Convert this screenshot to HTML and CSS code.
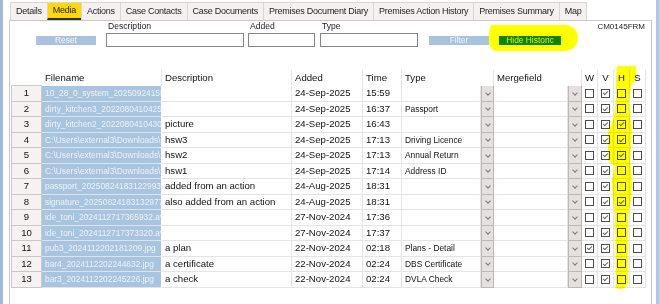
FILE: index.html
```html
<!DOCTYPE html>
<html lang="en">
<head>
  <meta charset="UTF-8">
  <meta name="viewport" content="width=device-width, initial-scale=1.0">
  <title>Media</title>
  <link rel="stylesheet" href="styles.css">
</head>
<body>

<div class="screen">
  <nav class="tabs">
    <a class="tab">Details</a>
    <a class="tab active">Media</a>
    <a class="tab">Actions</a>
    <a class="tab">Case Contacts</a>
    <a class="tab">Case Documents</a>
    <a class="tab">Premises Document Diary</a>
    <a class="tab">Premises Action History</a>
    <a class="tab">Premises Summary</a>
    <a class="tab">Map</a>
  </nav>

  <section class="panel">
    <div class="filters">
      <div class="field gap-reset"><button class="btn">Reset</button></div>
      <div class="field gap-desc"><label>Description</label><input class="in-desc"></div>
      <div class="field gap-added"><label>Added</label><input class="in-added"></div>
      <div class="field gap-type"><label>Type</label><input class="in-type"></div>
      <div class="field gap-filter"><button class="btn">Filter</button></div>
      <div class="field"><button class="btn hide">Hide Historic</button></div>
      <span class="form-code">CM0145FRM</span>
    </div>

    <div class="media-table">
      <div class="row head">
        <div class="cell num"></div>
        <div class="cell">Filename</div>
        <div class="cell">Description</div>
        <div class="cell">Added</div>
        <div class="cell">Time</div>
        <div class="cell span2">Type</div>
        <div class="cell span2">Mergefield</div>
        <div class="cell check">W</div>
        <div class="cell check">V</div>
        <div class="cell check">H</div>
        <div class="cell check">S</div>
      </div>
      <div id="mediaRows"></div>
    </div>
  </section>
</div>

<svg class="marker" width="659" height="304" viewBox="0 0 659 304">
  <path d="M492,25 L566,25 Q578,27 578,38 Q577,50 565,51 L496,51 Q489,50 489,39 Q489,26 492,25 Z"/>
  <path d="M617,66 L636,66 L636,78 L631,86 L629,100 L630,116 L632,130 L630,160 L632,180 L631,200 L628,215 L628,284 Q623,292 616,288 L615,215 L613,200 L612,181 L615,166 L608,160 L608,132 L614,118 L616,100 L616,80 Z"/>
</svg>

<script>
  // Media rows: filename, description, added, time, type, [W, V, H, S]
  const media = [
    ["10_28_0_system_20250924155912.jpg", "", "24-Sep-2025", "15:59", "", [0, 1, 0, 0]],
    ["dirty_kitchen3_20220804104251.jpg", "", "24-Sep-2025", "16:37", "Passport", [0, 1, 0, 0]],
    ["dirty_kitchen2_20220804104301.jpg", "picture", "24-Sep-2025", "16:43", "", [0, 1, 1, 0]],
    ["C:\\Users\\external3\\Downloads\\hsw3.pdf", "hsw3", "24-Sep-2025", "17:13", "Driving Licence", [0, 1, 1, 0]],
    ["C:\\Users\\external3\\Downloads\\hsw2.pdf", "hsw2", "24-Sep-2025", "17:13", "Annual Return", [0, 1, 1, 0]],
    ["C:\\Users\\external3\\Downloads\\hsw1.pdf", "hsw1", "24-Sep-2025", "17:14", "Address ID", [0, 1, 0, 0]],
    ["passport_20250824183122993.jpg", "added from an action", "24-Aug-2025", "18:31", "", [0, 1, 0, 0]],
    ["signature_20250824183132977.png", "also added from an action", "24-Aug-2025", "18:31", "", [0, 1, 1, 0]],
    ["ide_toni_2024112717365932.avi", "", "27-Nov-2024", "17:36", "", [0, 1, 0, 0]],
    ["ide_toni_2024112717373320.avi", "", "27-Nov-2024", "17:37", "", [0, 1, 0, 0]],
    ["pub3_2024112202181209.jpg", "a plan", "22-Nov-2024", "02:18", "Plans - Detail", [1, 1, 0, 0]],
    ["bar4_2024112202244632.jpg", "a certificate", "22-Nov-2024", "02:24", "DBS Certificate", [0, 1, 0, 0]],
    ["bar3_2024112202245226.jpg", "a check", "22-Nov-2024", "02:24", "DVLA Check", [0, 1, 0, 0]]
  ];

  function cell(cls, text) {
    const div = document.createElement("div");
    div.className = "cell " + cls;
    div.textContent = text;
    return div;
  }

  const list = document.getElementById("mediaRows");
  media.forEach((m, i) => {
    const row = document.createElement("div");
    row.className = "row";
    row.appendChild(cell("num", i + 1));
    row.appendChild(cell("file", m[0]));
    row.appendChild(cell("", m[1]));
    row.appendChild(cell("", m[2]));
    row.appendChild(cell("", m[3]));
    row.appendChild(cell("type", m[4]));
    row.appendChild(cell("drop", ""));
    row.appendChild(cell("", ""));
    row.appendChild(cell("drop", ""));
    m[5].forEach(on => {
      const c = cell("check", "");
      const box = document.createElement("span");
      box.className = on ? "box on" : "box";
      c.appendChild(box);
      row.appendChild(c);
    });
    list.appendChild(row);
  });
</script>

</body>
</html>
```

FILE: styles.css
```css
body { margin: 0; position: relative; font-family: "Liberation Sans", Arial, sans-serif; color: #1a1a1a; background: #fff; }

.screen { height: 304px; overflow: hidden; display: flex; flex-direction: column; box-sizing: border-box; padding: 2px 4px 0 6px; border-left: 3px solid #a2b7dd; border-right: 3px solid #b4c6e6; }

/* tabs */
.tabs { display: flex; height: 18px; margin-left: 1px; }
.tab { box-sizing: border-box; height: 18px; padding: 0 5px; border: 1px solid #dbd6d6; border-bottom: 0; margin-right: -1px; background: #f5f1f1; font-size: 9px; letter-spacing: -0.25px; line-height: 17px; color: #1e1e1e; white-space: nowrap; }
.tab.active { background: #ffd800; border-bottom: 2px solid #2e2e2e; line-height: 15px; }

.panel { flex: 1; border: 1px solid #cbc7c7; border-bottom: 0; padding: 0 6px 0 1px; }

/* filter bar */
.filters { display: flex; align-items: flex-end; padding-left: 25px; }
.field { display: flex; flex-direction: column; }
.field label { font-size: 8.6px; line-height: 11px; padding-left: 2px; margin-bottom: 1px; color: #222; }
.field input { box-sizing: border-box; height: 14px; border: 1px solid #858585; padding: 0; margin: 0; background: #fff; }
.in-desc { width: 138px; }
.in-added { width: 67px; }
.in-type { width: 98px; }
.gap-reset { margin-right: 10px; }
.gap-desc { margin-right: 4px; }
.gap-added { margin-right: 5px; }
.gap-type { margin-right: 11px; }
.gap-filter { margin-right: 10px; }
.btn { width: 60px; height: 9px; border: 0; padding: 0; margin: 0 0 2px; background: #a9c3de; color: #f2f6fb; font: 8.4px/9px "Liberation Sans", Arial, sans-serif; }
.btn.hide { width: 62px; background: #0b820b; color: #d2f500; }
.form-code { margin-left: auto; align-self: flex-start; font-size: 8px; line-height: 11px; color: #222; }

/* media grid */
.media-table { margin-top: 23px; width: 635px; }
.row { display: grid; grid-template-columns: 31px 120px 130px 71px 39px 79px 13px 74px 14px 16px 16px 16px 16px; height: 15.5px; font-size: 9.6px; }
.row.head { height: 16px; }
.cell { box-sizing: border-box; border-right: 1px solid #e4e4e4; border-bottom: 1px solid #e4e4e4; padding: 0 3px; white-space: nowrap; overflow: hidden; line-height: 14.5px; color: #111; }
.head .cell { border-bottom: 0; line-height: 16px; }
.head .num { background: #fff; border: 0; border-bottom: 1px solid #cdc8c8; }
.span2 { grid-column: span 2; }
.num { background: #f6f2f2; border: 1px solid #cdc8c8; border-top: 0; text-align: center; padding: 0; }
.file { background: #a8c4df; color: #edf3f9; font-size: 8.4px; border-right-color: #fff; border-bottom-color: #dbe5ef; }
.type { font-size: 8.4px; }
.drop { background: #e5e1e1; border: 1px solid #bdb8b8; border-top: 0; display: flex; align-items: center; justify-content: center; padding: 0; }
.drop::after { content: ""; width: 3px; height: 3px; border-right: 1px solid #7a7a7a; border-bottom: 1px solid #7a7a7a; transform: rotate(45deg); margin-top: -1px; }
.check { display: flex; align-items: center; justify-content: center; padding: 0; }
.box { box-sizing: border-box; width: 9px; height: 9px; border: 1px solid #4d4d4d; background: #fff; display: flex; align-items: center; justify-content: center; }
.box.on::after { content: ""; width: 2px; height: 4px; border-right: 1px solid #666; border-bottom: 1px solid #666; transform: rotate(45deg); margin-top: -1px; }

/* highlighter marks drawn over the form */
.marker { position: absolute; left: 0; top: 0; pointer-events: none; mix-blend-mode: multiply; }
.marker path { fill: #ffff00; }
```
